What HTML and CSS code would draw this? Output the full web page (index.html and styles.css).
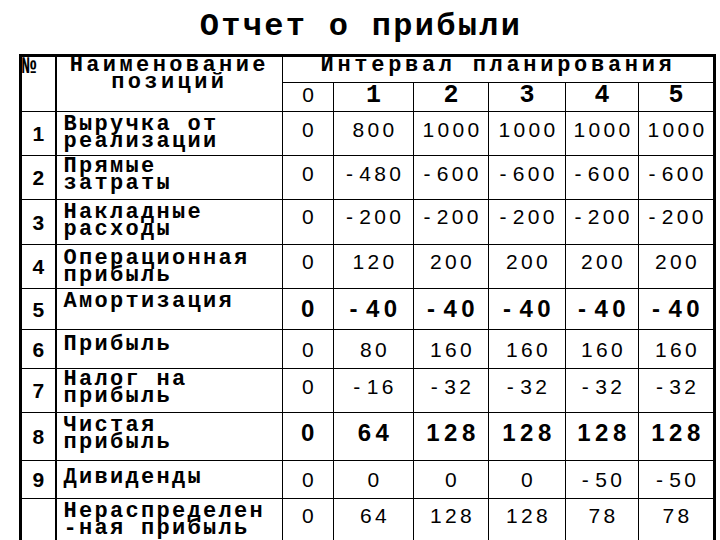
FILE: index.html
```html
<!DOCTYPE html>
<html lang="ru">
<head>
<meta charset="utf-8">
<title>Отчет о прибыли</title>
<link rel="stylesheet" href="styles.css">
</head>
<body>
<h1 class="title">Отчет о прибыли</h1>
<table class="report">
  <colgroup>
    <col class="c-no"><col class="c-name"><col class="c-0"><col class="c-1"><col class="c-2"><col class="c-3"><col class="c-4"><col class="c-5">
  </colgroup>
  <thead>
    <tr class="h1">
      <th class="no-h" rowspan="2">№</th>
      <th class="name-h" rowspan="2">Наименование<br>позиций</th>
      <th class="interval" colspan="6">Интервал планирования</th>
    </tr>
    <tr class="h2">
      <th class="p0">0</th><th class="pn">1</th><th class="pn">2</th><th class="pn">3</th><th class="pn">4</th><th class="pn">5</th>
    </tr>
  </thead>
  <tbody>
    <tr class="r r1">
      <td class="no">1</td><td class="name">Выручка от<br>реализации</td>
      <td class="v">0</td><td class="v">800</td><td class="v">1000</td><td class="v">1000</td><td class="v">1000</td><td class="v">1000</td>
    </tr>
    <tr class="r r2">
      <td class="no">2</td><td class="name">Прямые<br>затраты</td>
      <td class="v">0</td><td class="v"><span class="mn">-</span>480</td><td class="v"><span class="mn">-</span>600</td><td class="v"><span class="mn">-</span>600</td><td class="v"><span class="mn">-</span>600</td><td class="v"><span class="mn">-</span>600</td>
    </tr>
    <tr class="r r3">
      <td class="no">3</td><td class="name">Накладные<br>расходы</td>
      <td class="v">0</td><td class="v"><span class="mn">-</span>200</td><td class="v"><span class="mn">-</span>200</td><td class="v"><span class="mn">-</span>200</td><td class="v"><span class="mn">-</span>200</td><td class="v"><span class="mn">-</span>200</td>
    </tr>
    <tr class="r r4">
      <td class="no">4</td><td class="name">Операционная<br>прибыль</td>
      <td class="v">0</td><td class="v">120</td><td class="v">200</td><td class="v">200</td><td class="v">200</td><td class="v">200</td>
    </tr>
    <tr class="r r5 bold">
      <td class="no">5</td><td class="name">Амортизация</td>
      <td class="v">0</td><td class="v"><span class="mn">-</span>40</td><td class="v"><span class="mn">-</span>40</td><td class="v"><span class="mn">-</span>40</td><td class="v"><span class="mn">-</span>40</td><td class="v"><span class="mn">-</span>40</td>
    </tr>
    <tr class="r r6">
      <td class="no">6</td><td class="name">Прибыль</td>
      <td class="v">0</td><td class="v">80</td><td class="v">160</td><td class="v">160</td><td class="v">160</td><td class="v">160</td>
    </tr>
    <tr class="r r7">
      <td class="no">7</td><td class="name">Налог на<br>прибыль</td>
      <td class="v">0</td><td class="v"><span class="mn">-</span>16</td><td class="v"><span class="mn">-</span>32</td><td class="v"><span class="mn">-</span>32</td><td class="v"><span class="mn">-</span>32</td><td class="v"><span class="mn">-</span>32</td>
    </tr>
    <tr class="r r8 bold">
      <td class="no">8</td><td class="name">Чистая<br>прибыль</td>
      <td class="v">0</td><td class="v">64</td><td class="v">128</td><td class="v">128</td><td class="v">128</td><td class="v">128</td>
    </tr>
    <tr class="r r9">
      <td class="no">9</td><td class="name">Дивиденды</td>
      <td class="v">0</td><td class="v">0</td><td class="v">0</td><td class="v">0</td><td class="v"><span class="mn">-</span>50</td><td class="v"><span class="mn">-</span>50</td>
    </tr>
    <tr class="r r10">
      <td class="no"></td><td class="name">Нераспределен<br>-ная прибыль</td>
      <td class="v">0</td><td class="v">64</td><td class="v">128</td><td class="v">128</td><td class="v">78</td><td class="v">78</td>
    </tr>
  </tbody>
</table>
</body>
</html>
```
FILE: styles.css
```css
html, body {
  margin: 0;
  padding: 0;
  background: #fff;
  color: #000;
}
body {
  width: 720px;
  height: 540px;
  overflow: hidden;
}
.title {
  margin: 0 0 12px 0;
  padding: 12px 0 0 2px;
  height: 30px;
  line-height: 30px;
  font-family: "Liberation Mono", "DejaVu Sans Mono", monospace;
  font-weight: bold;
  font-size: 32px;
  letter-spacing: 2.3px;
  text-align: center;
}
.report {
  margin-left: 19px;
  width: 694px;
  table-layout: fixed;
  border-collapse: collapse;
  border: 3px solid #000;
}
.c-no { width: 35px; }
.c-name { width: 227px; }
.c-0 { width: 51px; }
.c-1 { width: 80px; }
.c-2 { width: 75px; }
.c-3 { width: 77px; }
.c-4 { width: 73px; }
.c-5 { width: 76px; }

.report th, .report td {
  border: 1px solid #000;
  padding: 0;
  overflow: visible;
  white-space: nowrap;
}
.report th {
  font-weight: bold;
}
.report .no-h, .report .no {
  border-right: 2px solid #000;
}
.no-h {
  vertical-align: top;
  text-align: left;
  padding: 2px 0 0 3px;
  font-family: "Liberation Mono", "DejaVu Sans Mono", monospace;
  font-size: 24px;
  line-height: 20px;
}
.name-h {
  vertical-align: top;
  text-align: center;
  padding: 3px 0 0 3px;
  font-family: "Liberation Mono", "DejaVu Sans Mono", monospace;
  font-size: 22px;
  line-height: 17px;
  letter-spacing: 3.4px;
}
.interval {
  vertical-align: top;
  text-align: center;
  padding: 3px 0 0 4px;
  font-family: "Liberation Mono", "DejaVu Sans Mono", monospace;
  font-size: 22px;
  line-height: 17px;
  letter-spacing: 3.7px;
}
.h1 { height: 27px; }
.h2 { height: 29px; }
.report .p0 {
  vertical-align: top;
  padding-top: 1px;
  font-family: "Liberation Sans", Arial, sans-serif;
  font-weight: normal;
  font-size: 21px;
  line-height: 21px;
}
.report .pn {
  vertical-align: top;
  padding-top: 0;
  font-family: "Liberation Mono", "DejaVu Sans Mono", monospace;
  font-weight: bold;
  font-size: 25px;
  line-height: 25px;
}

.no {
  vertical-align: middle;
  text-align: center;
  font-family: "Liberation Sans", Arial, sans-serif;
  font-weight: bold;
  font-size: 21px;
  line-height: 21px;
}
.name {
  vertical-align: top;
  text-align: left;
  padding: 4px 0 0 7px !important;
  font-family: "Liberation Mono", "DejaVu Sans Mono", monospace;
  font-weight: bold;
  font-size: 22px;
  line-height: 17px;
  letter-spacing: 2.3px;
}
.v {
  vertical-align: top;
  text-align: center;
  padding: 7px 0 0 3px !important;
  font-family: "Liberation Sans", Arial, sans-serif;
  font-size: 21px;
  line-height: 21px;
  letter-spacing: 3.3px;
}
.mn { margin-right: 3px; }

.bold .v {
  font-weight: bold;
  font-size: 24px;
  line-height: 24px;
  letter-spacing: 4.5px;
  padding: 8px 0 0 4px !important;
}
.bold .mn { margin-right: 4px; }

.r1 { height: 44px; }
.r2 { height: 44px; }
.r3 { height: 45px; }
.r4 { height: 44px; }
.r5 { height: 41px; }
.r6 { height: 39px; }
.r7 { height: 44px; }
.r8 { height: 48px; }
.r9 { height: 38px; }
.r10 { height: 50px; }

.r2 .name, .r7 .name { padding-top: 2px !important; }
.r4 .name { padding-top: 5px !important; }
.r6 .name { padding-top: 6px !important; }
.r9 .name { padding-top: 8px !important; }
.r3 .v, .r4 .v { padding-top: 5.5px !important; }
.r6 .v { padding-top: 9px !important; }
.r9 .v { padding-top: 8px !important; }
.r10 .v { padding-top: 6px !important; }
```
